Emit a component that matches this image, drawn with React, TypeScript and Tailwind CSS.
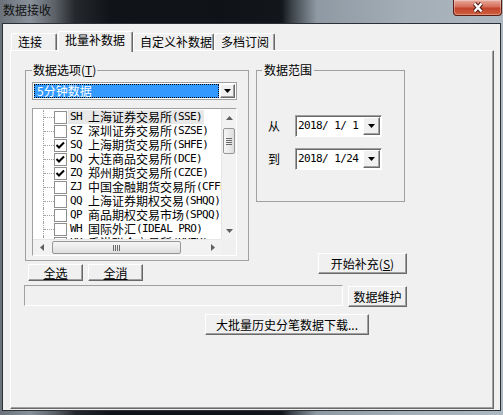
import React from "react";

const ui = "font-['Noto_Sans_CJK_SC',sans-serif] text-[12px] text-black";
const mono = "font-['DejaVu_Sans_Mono',monospace] text-[11px] tracking-[-0.6px]";
const raised =
  "bg-[#f0f0f0] border border-t-white border-l-white border-r-[#696969] border-b-[#696969] shadow-[inset_-1px_-1px_0_#a0a0a0]";

const markets = [
  { code: "SH", name: "上海证券交易所", tag: "(SSE)", checked: false },
  { code: "SZ", name: "深圳证券交易所", tag: "(SZSE)", checked: false },
  { code: "SQ", name: "上海期货交易所", tag: "(SHFE)", checked: true },
  { code: "DQ", name: "大连商品交易所", tag: "(DCE)", checked: true },
  { code: "ZQ", name: "郑州期货交易所", tag: "(CZCE)", checked: true },
  { code: "ZJ", name: "中国金融期货交易所", tag: "(CFFEX)", checked: false },
  { code: "QQ", name: "上海证券期权交易", tag: "(SHQQ)", checked: false },
  { code: "QP", name: "商品期权交易市场", tag: "(SPQQ)", checked: false },
  { code: "WH", name: "国际外汇", tag: "(IDEAL PRO)", checked: false },
  { code: "HK", name: "香港联合交易所", tag: "(HKEX)", checked: false },
];

const Tri = ({ dir = "down", color = "#000" }: { dir?: "down" | "up" | "left" | "right"; color?: string }) => {
  const pts = {
    down: "0,0 7,0 3.5,4",
    up: "0,4 7,4 3.5,0",
    left: "4,0 4,7 0,3.5",
    right: "0,0 0,7 4,3.5",
  }[dir];
  const vert = dir === "down" || dir === "up";
  return (
    <svg width={vert ? 7 : 4} height={vert ? 4 : 7} viewBox={vert ? "0 0 7 4" : "0 0 4 7"}>
      <polygon points={pts} fill={color} />
    </svg>
  );
};

const CheckBox = ({ checked }: { checked: boolean }) => (
  <span className="flex h-[13px] w-[13px] shrink-0 items-center justify-center border border-[#8e8f8f] bg-white">
    {checked && (
      <svg width="11" height="11" viewBox="0 0 11 11">
        <polyline points="1.5,5 4,7.5 9,2.5" fill="none" stroke="#000" strokeWidth="2" />
      </svg>
    )}
  </span>
);

const DatePicker = ({ value }: { value: string }) => (
  <div className="flex h-[22px] w-[87px] items-center border border-t-[#a0a0a0] border-l-[#a0a0a0] border-b-white border-r-white bg-white shadow-[inset_1px_1px_0_#696969]">
    <span className={`${mono} flex-1 whitespace-pre pl-[2px] text-black`}>{value}</span>
    <div className={`${raised} mr-[1px] flex h-[18px] w-[17px] items-center justify-center`}>
      <Tri />
    </div>
  </div>
);

const Button = ({ className, children }: { className: string; children: React.ReactNode }) => (
  <div className={`${raised} flex items-center justify-center leading-[14px] ${className}`}>{children}</div>
);

const Tab = ({ label, w, active }: { label: string; w: string; active?: boolean }) => (
  <div
    className={`${w} rounded-t-[2px] border-t border-l border-r border-t-white border-l-white border-r-[#696969] bg-[#f0f0f0] pl-[6px] leading-[16px] shadow-[inset_-1px_0_0_#a0a0a0] ${
      active ? "relative z-10 mb-[-2px] h-[21px]" : "h-[17px]"
    }`}
  >
    {label}
  </div>
);

export default function App() {
  return (
    <div
      className={`${ui} flex h-[415px] w-[503px] flex-col overflow-hidden bg-[linear-gradient(90deg,#6b7279_0%,#88909a_6%,#5a5f65_11%,#24272b_15%,#101317_22%,#0f1216_45%,#13171b_56%,#3c434a_58%,#8e99a3_63%,#a3adb6_80%,#aeb8c1_100%)]`}
    >
      {/* title bar */}
      <div className="flex h-[23px] shrink-0 items-start justify-between">
        <span className="pl-[3px] pt-[2px] leading-[16px] text-[#111]">数据接收</span>
        <div className="mr-[1px] flex h-[16px] w-[49px] items-center justify-center rounded-b-[4px] border border-t-0 border-[#5c1d14] bg-[linear-gradient(180deg,#e8ab9d_0%,#d56d59_45%,#c2432c_55%,#d0603f_100%)] shadow-[inset_0_0_0_1px_rgba(255,255,255,0.3)]">
          <svg width="14" height="11" viewBox="0 0 14 11">
            <path d="M3.5 1.5 L10.5 9.5 M10.5 1.5 L3.5 9.5" stroke="#4a1a12" strokeWidth="4.2" />
            <path d="M3.5 1.5 L10.5 9.5 M10.5 1.5 L3.5 9.5" stroke="#fff" strokeWidth="2.4" />
          </svg>
        </div>
      </div>

      {/* client area */}
      <div className="mx-[2px] mb-[4px] flex-1 border border-[#2b3036] bg-[#f0f0f0]">
        <div className="ml-[7px] mt-[7px] w-[484px]">
          {/* tabs */}
          <div className="flex h-[19px] items-end">
            <div className="ml-[1px]" />
            <Tab label="连接" w="w-[46px]" />
            <div className="ml-[1px]" />
            <Tab label="批量补数据" w="w-[75px]" active />
            <Tab label="自定义补数据" w="w-[81px]" />
            <Tab label="多档订阅" w="w-[61px]" />
          </div>

          {/* tab panel */}
          <div className="h-[359px] w-[484px] border border-t-white border-l-white border-r-[#696969] border-b-[#696969] shadow-[inset_-1px_-1px_0_#a0a0a0]">
            <div className="ml-[14px] mt-[12px] flex">
              {/* left column */}
              <div className="flex flex-col">
                <fieldset className="h-[198px] w-[224px] border border-[#a0a0a0] pl-[6px]">
                  <legend className="px-[1px] leading-[14px]">
                    数据选项(<span className="underline underline-offset-1">T</span>)
                  </legend>
                  <div className="pt-[5px]">
                    {/* combo */}
                    <div className="flex h-[18px] w-[205px] border border-[#a0a0a0] bg-white p-[1px]">
                      <div className="flex flex-1 items-center border border-dotted border-black bg-[#3399ff] pl-[2px] leading-[14px] text-white">
                        5分钟数据
                      </div>
                      <div className={`${raised} ml-[1px] flex w-[15px] items-center justify-center`}>
                        <Tri />
                      </div>
                    </div>

                    {/* tree list */}
                    <div className="mt-[8px] flex h-[148px] w-[205px] flex-col border border-t-[#a0a0a0] border-l-[#a0a0a0] border-b-white border-r-white bg-white">
                      <div className="flex min-h-0 flex-1">
                        <div className="min-w-0 flex-1 overflow-hidden pt-[1px]">
                          {markets.map((m, i) => (
                            <div key={m.code} className="flex h-[14px] items-center whitespace-nowrap pl-[10px]">
                              <span className="flex h-[14px] w-[11px] shrink-0 items-center border-l border-dotted border-[#a0a0a0]">
                                <span className="w-full border-t border-dotted border-[#a0a0a0]" />
                              </span>
                              <CheckBox checked={m.checked} />
                              <span
                                className={`ml-[1px] flex h-[14px] items-center px-[2px] leading-[14px] ${
                                  i === 0 ? "bg-[#e8e8e8]" : ""
                                }`}
                              >
                                <span className={`${mono} w-[18px]`}>{m.code}</span>
                                <span>{m.name}</span>
                                <span className={`${mono} whitespace-pre`}>{m.tag}</span>
                              </span>
                            </div>
                          ))}
                        </div>
                        {/* vertical scrollbar */}
                        <div className="flex w-[15px] flex-col border-l border-[#e6e6e6] bg-[#f2f2f2]">
                          <div className="flex h-[17px] items-center justify-center">
                            <Tri dir="up" color="#606060" />
                          </div>
                          <div className="mx-[1px] mt-[2px] flex h-[26px] flex-col items-center justify-center gap-[1px] rounded-[2px] border border-[#979797] bg-[linear-gradient(90deg,#f6f6f6,#dedede)]">
                            <span className="h-[1px] w-[6px] bg-[#6a6a6a]" />
                            <span className="h-[1px] w-[6px] bg-[#6a6a6a]" />
                            <span className="h-[1px] w-[6px] bg-[#6a6a6a]" />
                            <span className="h-[1px] w-[6px] bg-[#6a6a6a]" />
                          </div>
                          <div className="flex-1" />
                          <div className="flex h-[17px] items-center justify-center">
                            <Tri color="#606060" />
                          </div>
                        </div>
                      </div>
                      {/* horizontal scrollbar */}
                      <div className="flex h-[16px] shrink-0">
                        <div className="flex flex-1 border-t border-[#e6e6e6] bg-[#f2f2f2]">
                          <div className="flex w-[17px] items-center justify-center">
                            <Tri dir="left" color="#606060" />
                          </div>
                          <div className="my-[1px] ml-[2px] flex w-[129px] items-center justify-center gap-[1px] rounded-[2px] border border-[#979797] bg-[linear-gradient(180deg,#f6f6f6,#dedede)]">
                            <span className="h-[6px] w-[1px] bg-[#6a6a6a]" />
                            <span className="h-[6px] w-[1px] bg-[#6a6a6a]" />
                            <span className="h-[6px] w-[1px] bg-[#6a6a6a]" />
                            <span className="h-[6px] w-[1px] bg-[#6a6a6a]" />
                          </div>
                          <div className="flex-1" />
                          <div className="flex w-[17px] items-center justify-center">
                            <Tri dir="right" color="#606060" />
                          </div>
                        </div>
                        <div className="w-[15px] bg-[#f0f0f0]" />
                      </div>
                    </div>
                  </div>
                </fieldset>

                <div className="ml-[3px] mt-[3px] flex gap-[5px]">
                  <Button className="h-[17px] w-[55px]">
                    <span className="underline underline-offset-1">全选</span>
                  </Button>
                  <Button className="h-[17px] w-[55px]">
                    <span className="underline underline-offset-1">全消</span>
                  </Button>
                </div>
              </div>

              {/* right column */}
              <div className="ml-[7px] flex w-[151px] flex-col">
                <fieldset className="h-[139px] w-[149px] border border-[#a0a0a0] pl-[5px]">
                  <legend className="px-[2px] leading-[14px]">数据范围</legend>
                  <div className="flex flex-col gap-[11px] pl-[6px] pt-[38px]">
                    <div className="flex items-center">
                      <span className="w-[27px]">从</span>
                      <DatePicker value="2018/ 1/ 1" />
                    </div>
                    <div className="flex items-center">
                      <span className="w-[27px]">到</span>
                      <DatePicker value="2018/ 1/24" />
                    </div>
                  </div>
                </fieldset>
                <Button className="mt-[51px] h-[21px] w-[89px] self-end">
                  开始补充(<span className="underline underline-offset-1">S</span>)
                </Button>
              </div>
            </div>

            {/* progress row */}
            <div className="ml-[13px] mt-[4px] flex items-start">
              <div className="h-[21px] w-[319px] border border-t-[#a0a0a0] border-l-[#a0a0a0] border-b-white border-r-white bg-[#f0f0f0]" />
              <Button className="ml-[5px] mt-[1px] h-[21px] w-[59px]">数据维护</Button>
            </div>

            <div className="ml-[194px] mt-[7px]">
              <Button className="h-[21px] w-[164px]">大批量历史分笔数据下载...</Button>
            </div>
          </div>
        </div>
      </div>
    </div>
  );
}
